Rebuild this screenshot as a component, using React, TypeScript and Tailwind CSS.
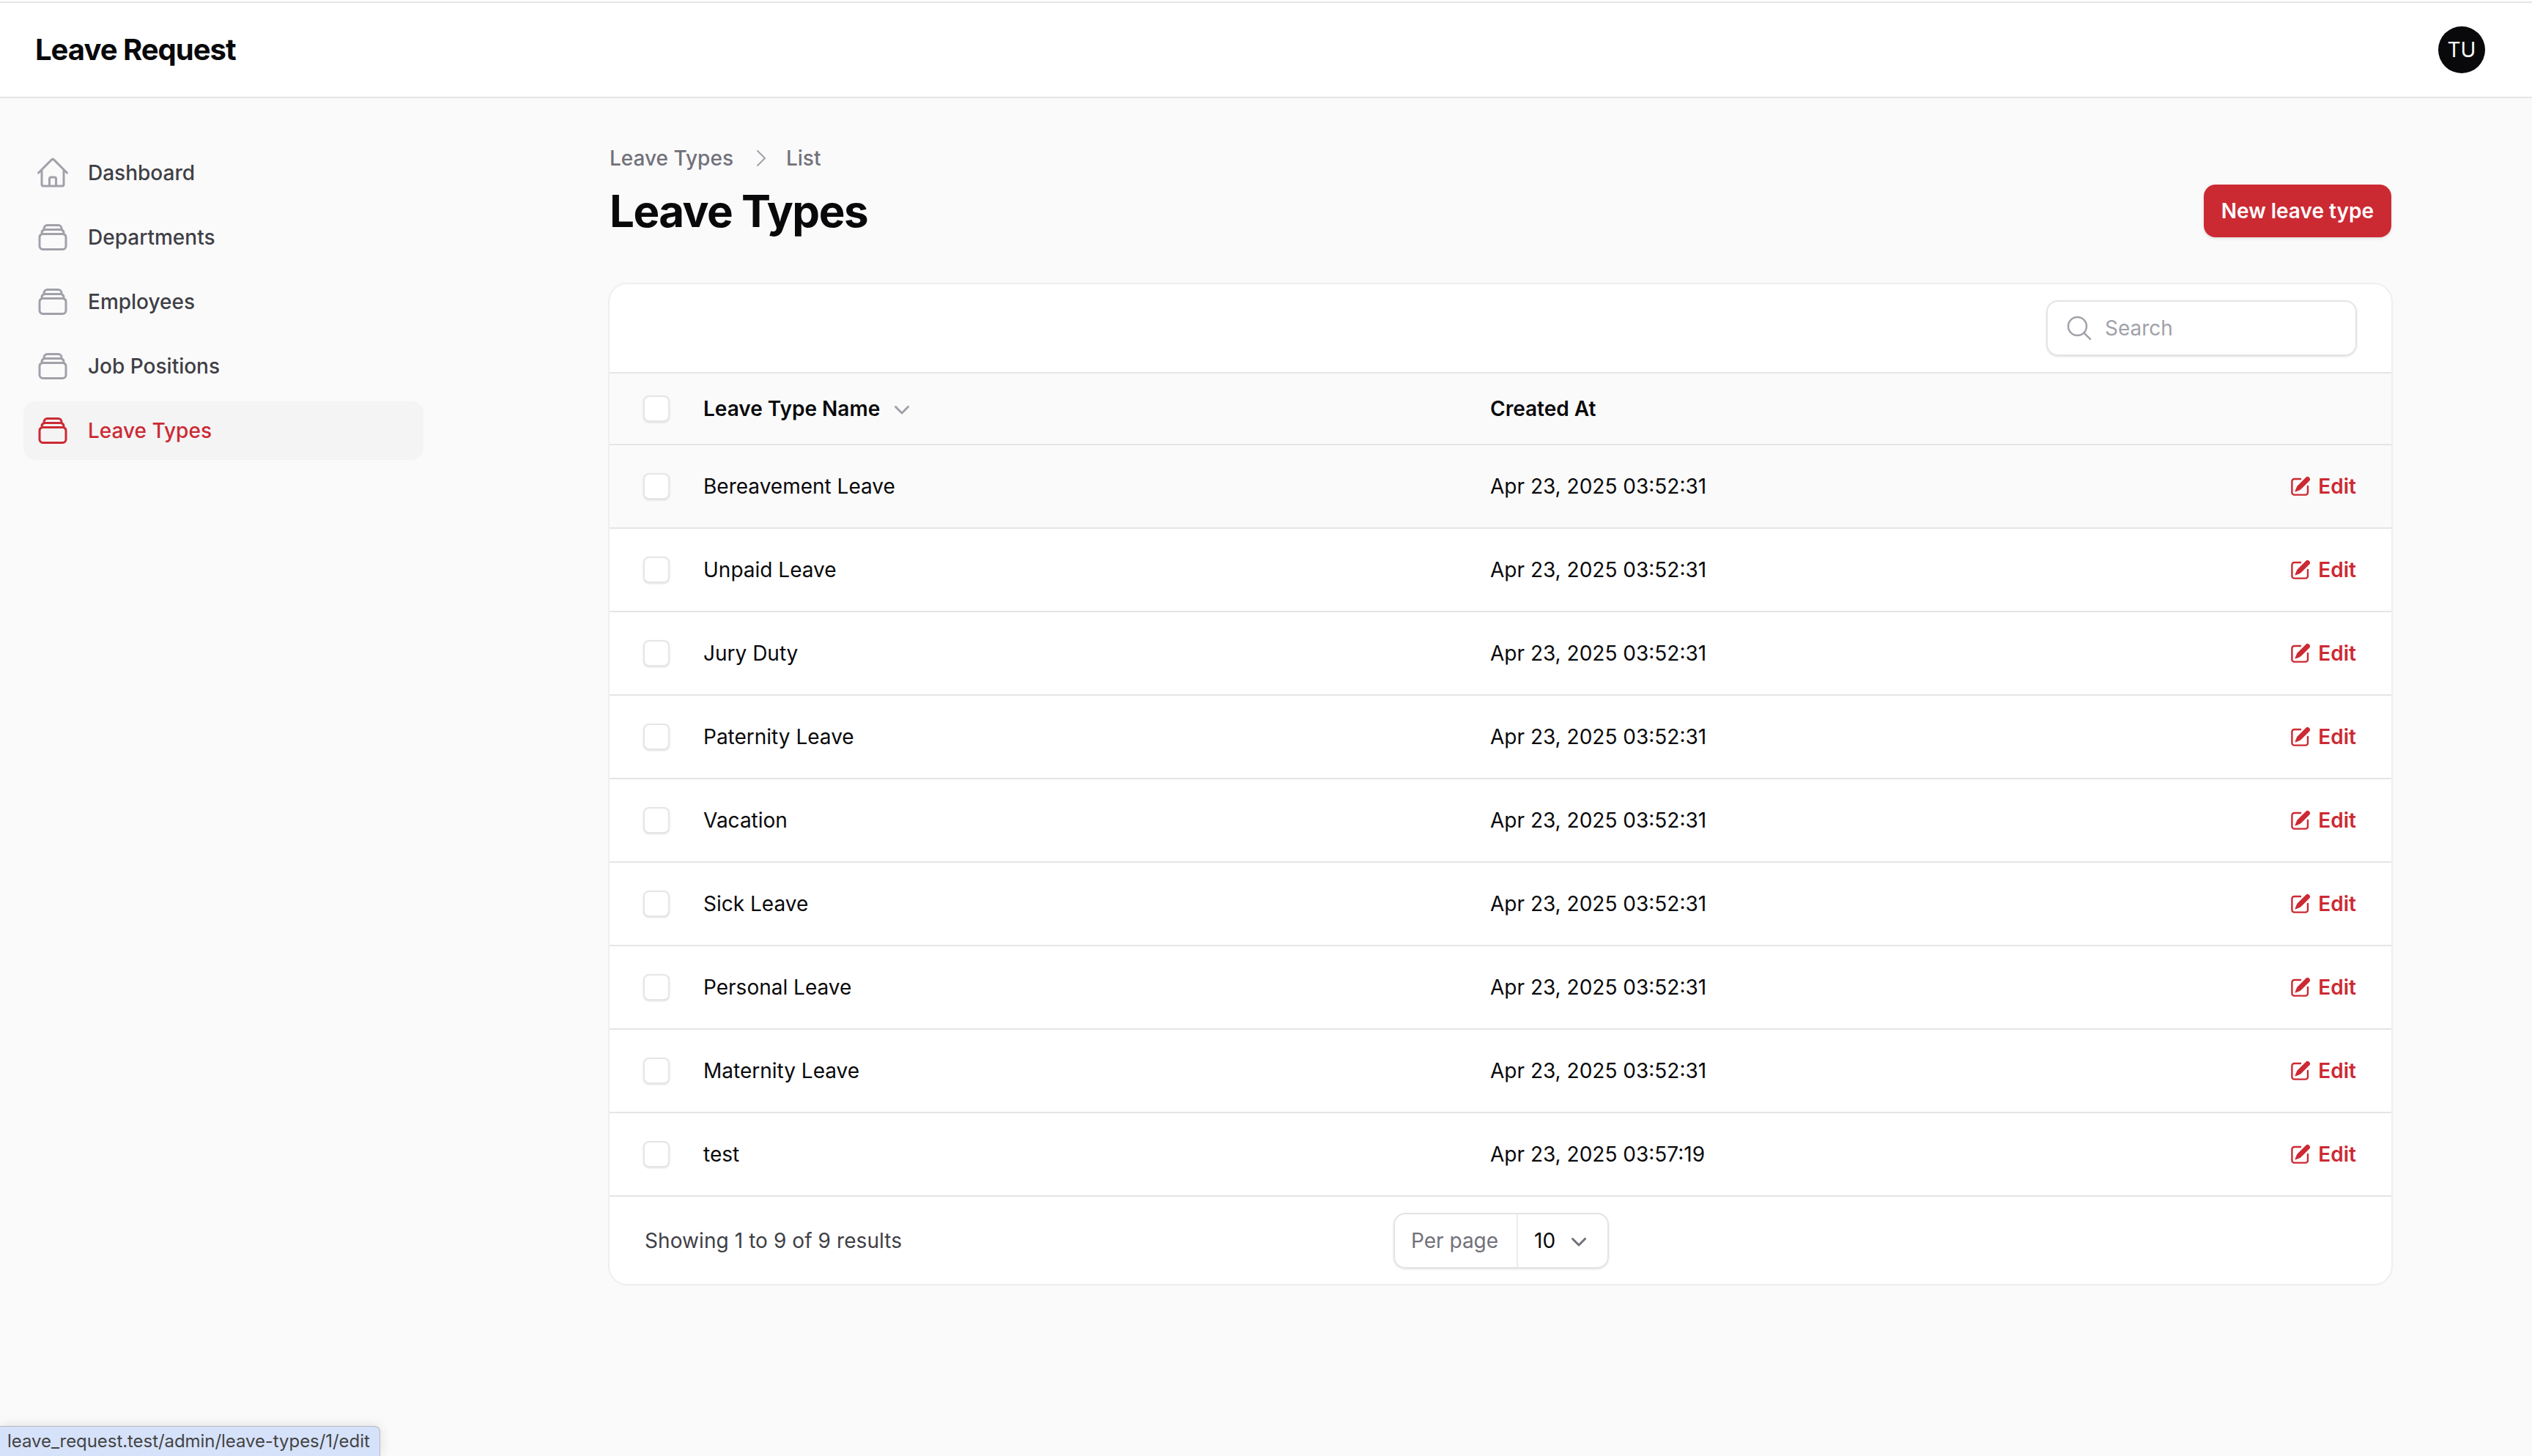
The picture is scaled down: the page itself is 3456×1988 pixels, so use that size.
import {
  HiMiniChevronDown,
  HiMiniPencilSquare,
  HiOutlineChevronRight,
  HiOutlineHome,
  HiOutlineMagnifyingGlass,
  HiOutlineRectangleStack,
} from "react-icons/hi2";

const navItems = [
  { label: "Dashboard", icon: HiOutlineHome },
  { label: "Departments", icon: HiOutlineRectangleStack },
  { label: "Employees", icon: HiOutlineRectangleStack },
  { label: "Job Positions", icon: HiOutlineRectangleStack },
  { label: "Leave Types", icon: HiOutlineRectangleStack, active: true },
];

const rows = [
  { name: "Bereavement Leave", created: "Apr 23, 2025 03:52:31", hover: true },
  { name: "Unpaid Leave", created: "Apr 23, 2025 03:52:31" },
  { name: "Jury Duty", created: "Apr 23, 2025 03:52:31" },
  { name: "Paternity Leave", created: "Apr 23, 2025 03:52:31" },
  { name: "Vacation", created: "Apr 23, 2025 03:52:31" },
  { name: "Sick Leave", created: "Apr 23, 2025 03:52:31" },
  { name: "Personal Leave", created: "Apr 23, 2025 03:52:31" },
  { name: "Maternity Leave", created: "Apr 23, 2025 03:52:31" },
  { name: "test", created: "Apr 23, 2025 03:57:19" },
];

function Checkbox() {
  return <div className="w-[36px] h-[36px] shrink-0 rounded-[8px] bg-white border-2 border-[#e6e6e7] shadow-sm" />;
}

function Topbar() {
  return (
    <header className="h-[132px] box-border flex items-center justify-between bg-white border-y-2 border-[#e5e5e6] pl-[48px] pr-[64px]">
      <div className="text-[40px] leading-[56px] font-bold tracking-tight text-[#09090b]">Leave Request</div>
      <div className="w-[64px] h-[64px] rounded-full bg-[#09090b] flex items-center justify-center text-[28px] text-white">
        TU
      </div>
    </header>
  );
}

function Sidebar() {
  return (
    <aside className="w-[610px] shrink-0 pt-[62px] pl-[32px] pr-[32px]">
      <nav className="flex flex-col gap-[8px]">
        {navItems.map((item) => {
          const Icon = item.icon;
          return (
            <a
              key={item.label}
              className={`h-[80px] flex items-center gap-[24px] px-[16px] rounded-[16px] text-[28px] font-medium ${
                item.active ? "bg-[#f4f4f5] text-[#cc2a33]" : "text-[#3f3f46]"
              }`}
            >
              <Icon className={`w-[48px] h-[48px] ${item.active ? "text-[#cc2a33]" : "text-[#a1a1aa]"}`} />
              {item.label}
            </a>
          );
        })}
      </nav>
    </aside>
  );
}

function LeaveTypesTable() {
  return (
    <div className="mt-[64px] rounded-[24px] bg-white ring-2 ring-[#efefef] shadow-sm overflow-hidden">
      <div className="h-[122px] box-border flex items-center justify-end border-b-2 border-[#e5e5e6] pr-[47px]">
        <div className="w-[424px] h-[76px] box-border flex items-center gap-[15px] px-[23px] rounded-[16px] border-2 border-[#e4e4e6] shadow-sm">
          <HiOutlineMagnifyingGlass className="w-[40px] h-[40px] text-[#a1a1aa] shrink-0" />
          <input
            placeholder="Search"
            className="w-full text-[28px] text-[#09090b] outline-none placeholder:text-[#a1a1aa]"
          />
        </div>
      </div>

      <div className="h-[98px] box-border flex items-center bg-[#fafafa] border-b-2 border-[#e5e5e6] text-[28px] font-semibold text-[#09090b]">
        <div className="w-[128px] pl-[46px] shrink-0">
          <Checkbox />
        </div>
        <div className="w-[1074px] shrink-0 flex items-center gap-[10px]">
          Leave Type Name
          <HiMiniChevronDown className="w-[40px] h-[40px] text-[#a1a1aa]" />
        </div>
        <div>Created At</div>
      </div>

      {rows.map((row) => (
        <div
          key={row.name}
          className={`h-[114px] box-border flex items-center border-b-2 border-[#e5e5e6] text-[28px] text-[#09090b] ${
            row.hover ? "bg-[#fafafa]" : ""
          }`}
        >
          <div className="w-[128px] pl-[46px] shrink-0">
            <Checkbox />
          </div>
          <div className="w-[1074px] shrink-0">{row.name}</div>
          <div className="flex-1">{row.created}</div>
          <a className="flex items-center gap-[8px] pr-[48px] font-semibold text-[#cc2a33]">
            <HiMiniPencilSquare className="w-[32px] h-[32px]" />
            Edit
          </a>
        </div>
      ))}

      <div className="h-[119px] box-border pt-[1px] flex items-center pl-[48px] text-[28px] text-[#3f3f46]">
        <div className="w-[1022px] shrink-0 tracking-[0.08px]">Showing 1 to 9 of 9 results</div>
        <div className="h-[76px] w-[294px] box-border flex items-center rounded-[16px] border-2 border-[#e4e4e6] shadow-sm">
          <div className="w-[168px] h-full shrink-0 box-border flex items-center pl-[22px] border-r-2 border-[#ececed] text-[#71717a]">
            Per page
          </div>
          <div className="flex-1 flex items-center pl-[22px] text-[#09090b]">
            10
            <HiMiniChevronDown className="ml-[12px] w-[40px] h-[40px] text-[#71717a]" />
          </div>
        </div>
      </div>
    </div>
  );
}

export default function App() {
  return (
    <div className="relative h-[1988px] overflow-hidden bg-[#fafafa] pt-[2px] font-['Inter',sans-serif]">
      <div className="absolute top-0 left-0 w-full h-[2px] bg-white" />
      <Topbar />
      <div className="flex">
        <Sidebar />
        <main className="flex-1 pl-[222px] pr-[192px] pt-[62px]">
          <div className="flex items-center text-[28px] leading-[40px] font-medium text-[#71717a]">
            Leave Types
            <HiOutlineChevronRight className="w-[32px] h-[32px] ml-[22px] mr-[18px] text-[#a1a1aa]" />
            List
          </div>
          <div className="mt-[16px] flex items-center justify-between">
            <h1 className="text-[60px] leading-[72px] font-bold tracking-tight text-[#09090b]">Leave Types</h1>
            <button className="h-[72px] px-[24px] rounded-[16px] bg-[#cc2a33] text-[28px] font-semibold text-white shadow-[0_2px_4px_rgba(0,0,0,0.1)]">
              New leave type
            </button>
          </div>
          <LeaveTypesTable />
        </main>
      </div>
      <div className="absolute left-0 bottom-0 h-[41px] w-[519px] box-border flex items-center pl-[10px] bg-[#d6e2fa] border-t border-r border-[#b4b8c2] rounded-tr-[8px] text-[24px] tracking-[-0.06px] text-[#444444] shadow-[0_0_16px_rgba(0,0,0,0.12)]">
        leave_request.test/admin/leave-types/1/edit
      </div>
    </div>
  );
}
